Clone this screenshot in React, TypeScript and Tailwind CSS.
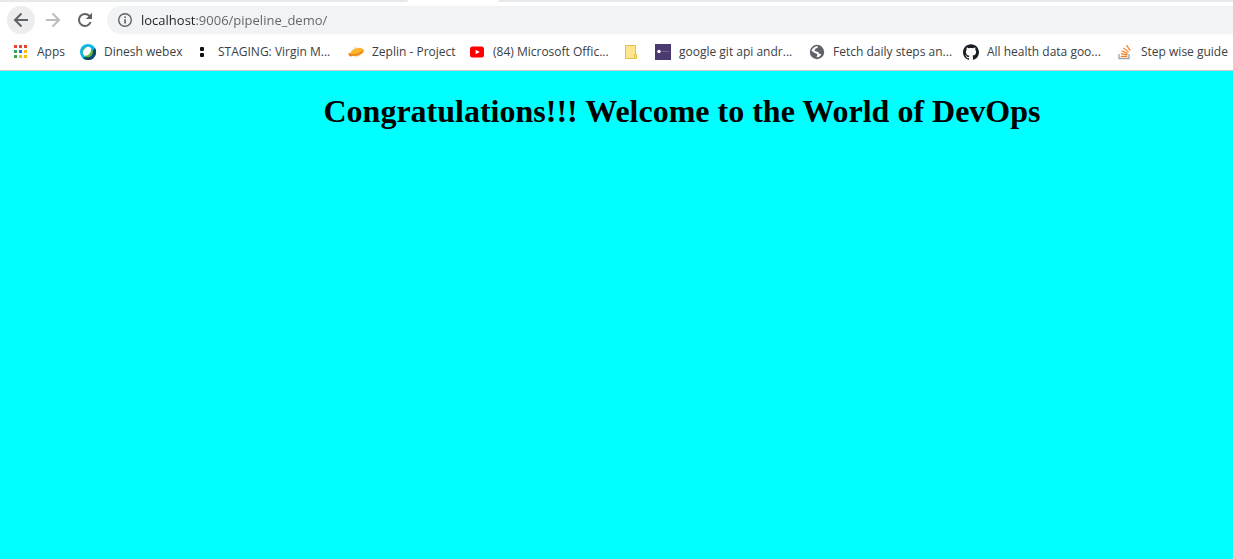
import type { ReactNode } from 'react';
import { SiGithub } from 'react-icons/si';

function BackIcon() {
  return (
    <svg viewBox="0 0 16 16" className="size-4" fill="none" stroke="currentColor" strokeWidth="2" aria-hidden="true">
      <path d="M15 8H2M8.5 1.5 2 8l6.5 6.5" />
    </svg>
  );
}

function ForwardIcon() {
  return (
    <svg viewBox="0 0 16 16" className="size-4" fill="none" stroke="currentColor" strokeWidth="2" aria-hidden="true">
      <path d="M1 8h13M7.5 1.5 14 8l-6.5 6.5" />
    </svg>
  );
}

function ReloadIcon() {
  return (
    <svg viewBox="0 0 16 16" className="size-4" aria-hidden="true">
      <path d="M13.6 10A6 6 0 1 1 12.4 3.9L14 5.5" fill="none" stroke="currentColor" strokeWidth="2" />
      <path d="M15 .8V7H8.8Z" fill="currentColor" />
    </svg>
  );
}

function InfoIcon() {
  return (
    <svg viewBox="0 0 16 16" className="size-4 shrink-0" aria-hidden="true">
      <circle cx="8" cy="8" r="6.3" fill="none" stroke="#5f6368" strokeWidth="1.4" />
      <path d="M7.2 7.2h1.7v4.3H7.2zM7.2 4.4h1.7V6H7.2z" fill="#5f6368" />
    </svg>
  );
}

const appDots = ['#ea4335', '#ea4335', '#ea4335', '#34a853', '#1a73e8', '#fbbc04', '#34a853', '#fbbc04', '#fbbc04'];

function AppsIcon() {
  return (
    <svg viewBox="0 0 16 16" className="size-4 shrink-0" aria-hidden="true">
      {appDots.map((fill, i) => (
        <rect key={i} x={1 + (i % 3) * 5} y={1 + Math.floor(i / 3) * 5} width="3" height="3" fill={fill} />
      ))}
    </svg>
  );
}

function WebexIcon() {
  return (
    <svg viewBox="0 0 16 16" className="size-4 shrink-0" aria-hidden="true">
      <circle cx="8" cy="8" r="8" fill="#07b6ea" />
      <path d="M15 4A8 8 0 0 1 2.600 13.900L8 12Z" fill="#0a4a6b" />
      <ellipse cx="7.700" cy="8" rx="5.200" ry="5.200" fill="#65b946" />
      <ellipse cx="7" cy="7.300" rx="3.400" ry="5" transform="rotate(38 7 7.300)" fill="#fff" />
    </svg>
  );
}

function DotsIcon() {
  return (
    <svg viewBox="0 0 16 16" className="size-4 shrink-0" fill="#111" aria-hidden="true">
      <rect x="6" y="3" width="4" height="4" rx="1" />
      <rect x="6" y="9" width="4" height="4" rx="1" />
    </svg>
  );
}

function ZeplinIcon() {
  return (
    <svg viewBox="0 0 16 16" className="size-4 shrink-0" aria-hidden="true">
      <path d="m6 4 2-2 1 2 4-1-1 9-3 1-2 1-1-2H2l1-3Z" fill="#fbe3cf" />
      <path d="M0 9.500 4 9l1 3-3 .5Z" fill="#e96f13" />
      <ellipse cx="9" cy="8" rx="7" ry="3.700" transform="rotate(-17 9 8)" fill="#fdb52b" />
      <path d="M2.300 10.300C7 10.500 12 8.800 15.700 6c.3 3-4 5.500-8.200 5.800-2.600.2-4.600-.3-5.200-1.500Z" fill="#f08a1a" />
    </svg>
  );
}

function YoutubeIcon() {
  return (
    <svg viewBox="0 0 16 16" className="size-4 shrink-0" aria-hidden="true">
      <rect x="1" y="2.500" width="14" height="11" rx="2.500" fill="#f00" />
      <path d="m6.600 5.700 4.200 2.300-4.200 2.300Z" fill="#fff" />
    </svg>
  );
}

function FolderIcon() {
  return (
    <svg viewBox="0 0 16 16" className="size-4 shrink-0" fill="#ffe58c" stroke="#e5c14a" aria-hidden="true">
      <path d="M2.500 1.500h10v9h1v4h-11Z" />
      <path d="M11.500 14v-3.500h2v3.500Z" />
    </svg>
  );
}

function PurpleIcon() {
  return (
    <svg viewBox="0 0 16 16" className="size-4 shrink-0" aria-hidden="true">
      <path d="M0 0h16v16H0z" fill="#4b3a70" />
      <path d="M2 7.500h4M7 7.500h7" stroke="#7d709c" strokeWidth=".8" />
      <circle cx="4" cy="7.500" r="1.700" fill="#fff" />
    </svg>
  );
}

function GlobeIcon() {
  return (
    <svg viewBox="0 0 16 16" className="size-4 shrink-0" aria-hidden="true">
      <circle cx="8" cy="8" r="7.200" fill="#5f6368" />
      <path
        d="M9 2.400c.2 1.200-.8 1.800-2.200 1.900-.8.600-.2 1.300-1.200 1.800-.2.900.5 1.300 1.700 1.300 1.700 0 2.600.8 2.600 2 1 .5 1.500.3 2.300.8-.6 1.700-2.200 3-4.400 3.200-.2-1 .3-1.800.7-2.300-.2-1.300-1.300-1.600-2.400-1.900C4.900 8.300 3.800 7.700 2.500 7A5.800 5.800 0 0 1 9 2.400Z"
        fill="#fff"
      />
    </svg>
  );
}

function StackIcon() {
  return (
    <svg viewBox="0 0 16 16" className="size-4 shrink-0" fill="none" aria-hidden="true">
      <path d="M2 10v4.500h10V10" stroke="#a0a3a6" strokeWidth="1.300" />
      <path d="M3.700 12.300h6.600M3.900 9.600l6.500 1.200M4.700 6.800l6 2.800M6.300 3.900l5.300 4.200M9.500 1.200l3.700 5.500" stroke="#f48024" strokeWidth="1.200" />
    </svg>
  );
}

type Bookmark = { label: string; icon: ReactNode; width: string };

const bookmarks: Bookmark[] = [
  { label: 'Apps', icon: <AppsIcon />, width: 'w-[67px]' },
  { label: 'Dinesh webex', icon: <WebexIcon />, width: 'w-[114px]' },
  { label: 'STAGING: Virgin M...', icon: <DotsIcon />, width: 'w-[154px]' },
  { label: 'Zeplin - Project', icon: <ZeplinIcon />, width: 'w-[121px]' },
  { label: '(84) Microsoft Offic...', icon: <YoutubeIcon />, width: 'w-[154px]' },
  { label: '', icon: <FolderIcon />, width: 'w-8' },
  { label: 'google git api andr...', icon: <PurpleIcon />, width: 'w-[154px]' },
  { label: 'Fetch daily steps an...', icon: <GlobeIcon />, width: 'w-[154px]' },
  { label: 'All health data goo...', icon: <SiGithub className="size-4 shrink-0 text-[#1b1f23]" />, width: 'w-[154px]' },
  { label: 'Step wise guide', icon: <StackIcon />, width: 'w-[116px]' },
];

export default function App() {
  return (
    <div className="flex min-h-screen flex-col overflow-x-hidden bg-white font-['Open_Sans','Noto_Sans',sans-serif]">
      <header className="border-b border-[#c9cccf]">
        <div className="flex h-0.5 bg-white">
          <div className="w-[408px] rounded-br-sm bg-[#e7eaed]" />
          <div className="w-[90px]" />
          <div className="flex-1 rounded-bl-sm bg-[#e7eaed]" />
        </div>
        <div className="flex h-9 items-center pl-[7px]">
          <nav aria-label="Navigation" className="flex gap-1 text-[#5f6368]">
            <button aria-label="Back" className="flex size-7 items-center justify-center rounded-full bg-[#ededed]">
              <BackIcon />
            </button>
            <button aria-label="Forward" className="flex size-7 items-center justify-center rounded-full text-[#babcbe]">
              <ForwardIcon />
            </button>
            <button aria-label="Reload" className="flex size-7 items-center justify-center rounded-full">
              <ReloadIcon />
            </button>
          </nav>
          <div className="ml-2 flex h-7 flex-1 items-center gap-2 rounded-l-full bg-[#f1f3f4] pl-2.5">
            <InfoIcon />
            <input
              aria-label="Address"
              defaultValue="localhost:9006/pipeline_demo/"
              className="h-7 min-w-0 flex-1 bg-[linear-gradient(90deg,#202124_55px,#5f6368_55px)] bg-clip-text text-[13px] text-transparent caret-black outline-none"
            />
          </div>
        </div>
        <nav aria-label="Bookmarks" className="flex h-8 items-center pb-1 pl-[13px]">
          {bookmarks.map(({ label, icon, width }) => (
            <a
              key={label}
              href="#"
              aria-label={label || 'Folder'}
              className={`flex shrink-0 items-center gap-2 text-xs whitespace-nowrap text-[#3c4043] ${width}`}
            >
              {icon}
              {label && <span>{label}</span>}
            </a>
          ))}
        </nav>
      </header>
      <main className="flex-1 bg-[#00ffff] pt-[22px] pl-[131px]">
        <h1 className="text-center font-['Liberation_Serif',serif] text-[32px] leading-9 font-bold text-black">
          Congratulations!!! Welcome to the World of DevOps
        </h1>
      </main>
    </div>
  );
}
